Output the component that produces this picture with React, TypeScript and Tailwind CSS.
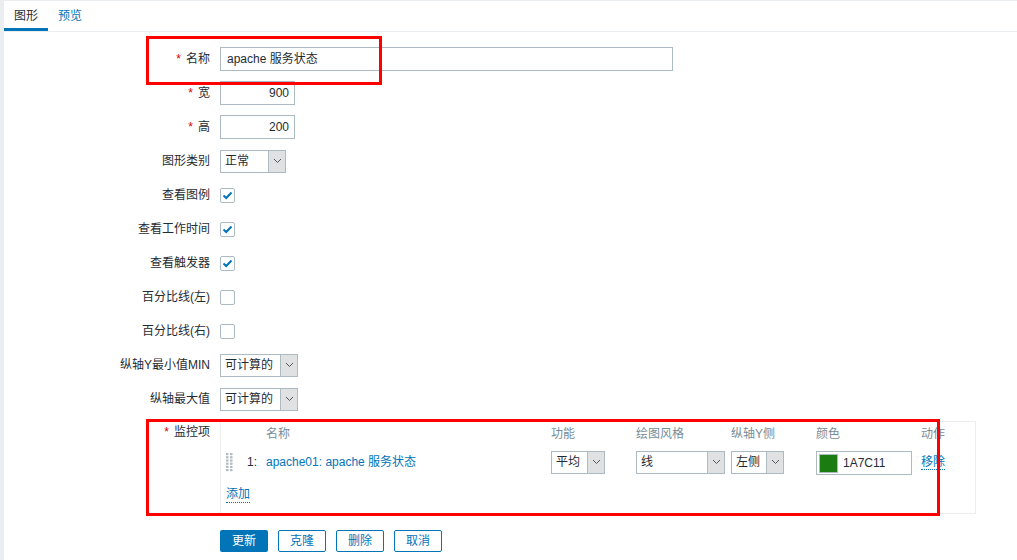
import React from "react";

const font = "font-['Liberation_Sans','Noto_Sans_CJK_SC',sans-serif]";

function Chevron() {
  return (
    <svg width="9" height="6" viewBox="0 0 9 6" className="block">
      <polyline points="1,1 4.5,4.5 8,1" fill="none" stroke="#555" strokeWidth="1" />
    </svg>
  );
}

function Select({ value, width }: { value: string; width: string }) {
  return (
    <div className={`flex h-[23px] ${width} border border-[#acbbc2] bg-white`}>
      <div className="flex-1 flex items-center pl-[4px] text-[12px] text-[#1f2c33] leading-none">{value}</div>
      <div className="w-[17px] flex items-center justify-center bg-[#dfe1e2] border-l border-[#acbbc2]">
        <Chevron />
      </div>
    </div>
  );
}

function Checkbox({ checked }: { checked?: boolean }) {
  return (
    <div className="w-[15px] h-[15px] rounded-[2px] border border-[#acbbc2] bg-white flex items-center justify-center">
      {checked && (
        <svg width="11" height="9" viewBox="0 0 11 9">
          <polyline points="1.5,4.5 4.2,7 9.5,1.5" fill="none" stroke="#0275b8" strokeWidth="2" />
        </svg>
      )}
    </div>
  );
}

function Label({ text, required }: { text: string; required?: boolean }) {
  return (
    <div className="w-[206px] pr-[0px] text-right text-[12px] text-[#1f2c33] leading-none">
      {required && <span className="text-[#d40000] mr-[5px]">*</span>}
      {text}
    </div>
  );
}

function Row({ label, required, children }: { label: string; required?: boolean; children: React.ReactNode }) {
  return (
    <div className="flex items-center h-[24px] gap-[10px]">
      <Label text={label} required={required} />
      {children}
    </div>
  );
}

function DragHandle() {
  return (
    <svg width="7" height="19" viewBox="0 0 7 19" className="block">
      {[0, 1, 2, 3, 4, 5].map((r) =>
        [0, 1].map((c) => (
          <rect key={`${r}-${c}`} x={c * 4} y={r * 3.2} width="2.5" height="2.2" fill="#b4bcc1" />
        ))
      )}
    </svg>
  );
}

export default function App() {
  return (
    <div className={`${font} w-[1017px] h-[560px] overflow-hidden bg-[#ebeef0] pt-[1px] pl-[4px] relative`}>
      <div className="bg-white h-full">
        {/* Tabs */}
        <div className="flex h-[31px] border-b border-[#ebeef0] text-[12px]">
          <div className="px-[10px] flex items-center text-[#1f2c33] border-b-[3px] border-[#0275b8] pt-[2px]">图形</div>
          <div className="px-[10px] flex items-center text-[#0275b8] pb-[1px]">预览</div>
        </div>

        {/* Form */}
        <div className="pt-[15px] flex flex-col gap-[10px]">
          <Row label="名称" required>
            <div className="w-[453px] h-[24px] border border-[#acbbc2] flex items-center px-[6px] text-[12px] text-[#1f2c33]">
              apache 服务状态
            </div>
          </Row>
          <Row label="宽" required>
            <div className="w-[75px] h-[24px] border border-[#acbbc2] flex items-center justify-end px-[5px] text-[12px] text-[#1f2c33]">
              900
            </div>
          </Row>
          <Row label="高" required>
            <div className="w-[75px] h-[24px] border border-[#acbbc2] flex items-center justify-end px-[5px] text-[12px] text-[#1f2c33]">
              200
            </div>
          </Row>
          <Row label="图形类别">
            <Select value="正常" width="w-[66px]" />
          </Row>
          <Row label="查看图例">
            <Checkbox checked />
          </Row>
          <Row label="查看工作时间">
            <Checkbox checked />
          </Row>
          <Row label="查看触发器">
            <Checkbox checked />
          </Row>
          <Row label="百分比线(左)">
            <Checkbox />
          </Row>
          <Row label="百分比线(右)">
            <Checkbox />
          </Row>
          <Row label="纵轴Y最小值MIN">
            <Select value="可计算的" width="w-[78px]" />
          </Row>
          <Row label="纵轴最大值">
            <Select value="可计算的" width="w-[78px]" />
          </Row>

          {/* Items table */}
          <div className="flex items-start gap-[10px]">
            <div className="pt-[5px]">
              <Label text="监控项" required />
            </div>
            <div className="w-[756px] border border-[#ebeef0] text-[12px] pb-[6px]">
              <div className="flex h-[24px] items-center text-[#768d99]">
                <div className="w-[45px]" />
                <div className="w-[285px]">名称</div>
                <div className="w-[85px]">功能</div>
                <div className="w-[95px]">绘图风格</div>
                <div className="w-[85px]">纵轴Y侧</div>
                <div className="w-[105px]">颜色</div>
                <div className="flex-1">动作</div>
              </div>
              <div className="flex h-[32px] items-center">
                <div className="w-[26px] pl-[5px]">
                  <DragHandle />
                </div>
                <div className="w-[19px] text-[#1f2c33]">1:</div>
                <div className="w-[285px] text-[#0275b8]">apache01: apache 服务状态</div>
                <div className="w-[85px]">
                  <Select value="平均" width="w-[54px]" />
                </div>
                <div className="w-[95px]">
                  <Select value="线" width="w-[89px]" />
                </div>
                <div className="w-[85px]">
                  <Select value="左侧" width="w-[53px]" />
                </div>
                <div className="w-[105px]">
                  <div className="w-[96px] h-[24px] border border-[#acbbc2] flex items-center pl-[2px] gap-[5px] mt-[2px]">
                    <div className="w-[19px] h-[19px] bg-[#1A7C11] border border-[#acbbc2]" />
                    <span className="text-[#1f2c33]">1A7C11</span>
                  </div>
                </div>
                <div className="flex-1">
                  <span className="text-[#0275b8] border-b border-dotted border-[#0275b8]">移除</span>
                </div>
              </div>
              <div className="mt-[5px] h-[24px] flex items-center pl-[5px]">
                <span className="text-[#0275b8] border-b border-dotted border-[#0275b8] leading-[15px]">添加</span>
              </div>
            </div>
          </div>

          {/* Buttons */}
          <div className="flex gap-[10px] pl-[216px] mt-[6px]">
            <button className="w-[48px] h-[22px] bg-[#0275b8] text-white text-[12px] rounded-[2px]">更新</button>
            <button className="w-[48px] h-[22px] border border-[#0275b8] text-[#0275b8] text-[12px] rounded-[2px] bg-white">克隆</button>
            <button className="w-[48px] h-[22px] border border-[#0275b8] text-[#0275b8] text-[12px] rounded-[2px] bg-white">删除</button>
            <button className="w-[48px] h-[22px] border border-[#0275b8] text-[#0275b8] text-[12px] rounded-[2px] bg-white">取消</button>
          </div>
        </div>
      </div>

      {/* Red annotation boxes */}
      <div className="absolute left-[146px] top-[36px] w-[236px] h-[49px] border-[3px] border-[#ff0000] pointer-events-none" />
      <div className="absolute left-[146px] top-[419px] w-[794px] h-[97px] border-[3px] border-[#ff0000] pointer-events-none" />
    </div>
  );
}
